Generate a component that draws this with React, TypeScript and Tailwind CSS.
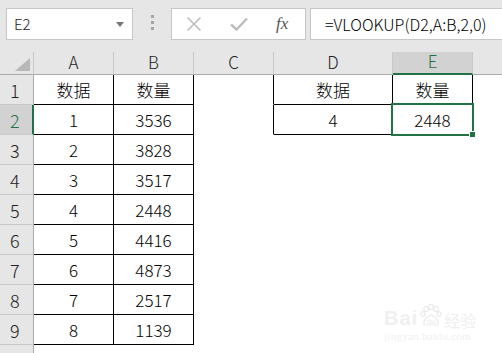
const COLS = ['A', 'B', 'C', 'D', 'E'];

const colA = ['数据', '1', '2', '3', '4', '5', '6', '7', '8'];
const colB = ['数量', '3536', '3828', '3517', '2448', '4416', '4873', '2517', '1139'];

function cellText(row: number, col: number) {
  if (col === 0) return colA[row - 1] ?? '';
  if (col === 1) return colB[row - 1] ?? '';
  if (row === 1 && col === 3) return '数据';
  if (row === 1 && col === 4) return '数量';
  if (row === 2 && col === 3) return '4';
  if (row === 2 && col === 4) return '2448';
  return '';
}

function Cell({ row, col }: { row: number; col: number }) {
  const inLeft = row <= 9 && col <= 1;
  const inRight = row <= 2 && (col === 3 || col === 4);
  const leftOfRight = row <= 2 && col === 2;
  const rightBorder = inLeft || inRight || leftOfRight ? 'border-r-black' : 'border-r-transparent';
  const bottomBorder = inLeft || inRight ? 'border-b-black' : 'border-b-transparent';
  return (
    <div
      className={`flex items-center justify-center border-r border-b pt-[1px] bg-white text-black text-[17px] font-light ${rightBorder} ${bottomBorder}`}
    >
      {cellText(row, col)}
    </div>
  );
}

function Toolbar() {
  return (
    <div className="flex items-start h-[52px] bg-[#e6e6e6] pt-[8px] pl-[6px]">
      {/* 名称框 */}
      <div className="flex items-center justify-between w-[127px] h-[32px] bg-white border border-[#c6c6c6] pl-[7px] pr-[8px]">
        <span className="text-[15px] font-light text-[#222]">E2</span>
        <svg width="8" height="5" viewBox="0 0 8 5">
          <polygon points="0,0 8,0 4,5" fill="#777" />
        </svg>
      </div>
      <div className="flex flex-col gap-[3px] w-[38px] items-center pt-[7px]">
        <span className="w-[3px] h-[3px] bg-[#a6a6a6]" />
        <span className="w-[3px] h-[3px] bg-[#a6a6a6]" />
        <span className="w-[3px] h-[3px] bg-[#a6a6a6]" />
      </div>
      {/* 取消 / 确认 / 插入函数 */}
      <div className="flex items-center w-[135px] h-[32px] bg-white border border-[#c6c6c6]">
        <svg className="ml-[14px]" width="16" height="16" viewBox="0 0 16 16">
          <path d="M1.5 1.5 L14.5 14.5 M14.5 1.5 L1.5 14.5" stroke="#bdbdbd" strokeWidth="1.6" fill="none" />
        </svg>
        <svg className="ml-[28px]" width="18" height="14" viewBox="0 0 18 14">
          <path d="M1 7.5 L6.5 12.5 L17 1.5" stroke="#bdbdbd" strokeWidth="2.4" fill="none" />
        </svg>
        <span className="ml-[28px] text-[17px] italic text-[#555] [font-family:'Liberation_Serif',serif]">fx</span>
      </div>
      {/* 编辑栏 */}
      <div className="flex items-center flex-1 h-[32px] ml-[4px] bg-white border border-r-0 border-[#c6c6c6] pl-[14px]">
        <span className="text-[16px] font-light text-black">=VLOOKUP(D2,A:B,2,0)</span>
      </div>
    </div>
  );
}

function Sheet() {
  const rows = Array.from({ length: 10 }, (_, i) => i + 1);
  return (
    <div className="grid grid-cols-[34px_80px_80px_80px_119px_80px_1fr] grid-rows-[23px_repeat(10,30px)]">
      {/* 左上角 */}
      <div className="relative bg-[#e6e6e6] border-r border-b border-r-[#c8c8c8] border-b-[#ababab]">
        <svg className="absolute left-[15px] top-[6px]" width="15" height="13" viewBox="0 0 15 13">
          <polygon points="15,0 15,13 0,13" fill="#b8b8b8" />
        </svg>
      </div>
      {COLS.map((c) =>
        c === 'E' ? (
          <div
            key={c}
            className="flex items-end justify-center bg-[#d2d2d2] border-r border-r-[#c8c8c8] border-b-2 border-b-[#217346] text-[#217346] text-[17px] font-light"
          >
            {c}
          </div>
        ) : (
          <div
            key={c}
            className="flex items-end justify-center bg-[#e6e6e6] border-r border-b border-r-[#c8c8c8] border-b-[#ababab] text-[#222] text-[17px] font-light"
          >
            {c}
          </div>
        ),
      )}
      <div className="bg-[#e6e6e6] border-b border-b-[#ababab]" />

      {rows.map((r) => (
        <div key={r} className="contents">
          {r === 2 ? (
            <div className="flex items-end pl-[10px] bg-[#d2d2d2] border-r-2 border-r-[#217346] border-b border-b-[#c8c8c8] text-[#217346] text-[18px] font-light">
              {r}
            </div>
          ) : (
            <div className="flex items-end pl-[10px] bg-[#e6e6e6] border-r border-r-[#ababab] border-b border-b-[#c8c8c8] text-[#222] text-[18px] font-light">
              {r < 10 ? r : ''}
            </div>
          )}
          {[0, 1, 2, 3, 4].map((c) => (
            <Cell key={c} row={r} col={c} />
          ))}
          <div className="bg-white" />
        </div>
      ))}
    </div>
  );
}

function Watermark() {
  return (
    <div className="absolute left-[384px] top-[308px] flex flex-col items-start text-[#f0f0f0] pointer-events-none">
      <div className="flex items-end gap-[1px]">
        <span className="text-[20px] font-bold leading-none tracking-[1px] [font-family:'Liberation_Sans',sans-serif]">Bai</span>
        <svg width="24" height="24" viewBox="0 0 24 24" className="-mt-[6px]">
          <g fill="none" stroke="#ebebeb" strokeWidth="1.2">
            <ellipse cx="7" cy="5" rx="2.2" ry="2.6" />
            <ellipse cx="12" cy="3" rx="2.2" ry="2.6" />
            <ellipse cx="17" cy="5" rx="2.2" ry="2.6" />
            <ellipse cx="4" cy="10" rx="2" ry="2.4" />
            <ellipse cx="20" cy="10" rx="2" ry="2.4" />
            <path d="M5 21 Q4 14 12 11 Q20 14 19 21 Z" />
          </g>
          <text x="12" y="20" textAnchor="middle" fontSize="8" fill="#ebebeb" fontFamily="Liberation Sans">du</text>
        </svg>
        <span className="text-[16px] leading-none [font-family:'Noto_Sans_CJK_SC',sans-serif]">经验</span>
      </div>
      <span className="mt-[3px] text-[11px] leading-none tracking-[0.3px] [font-family:'Liberation_Serif',serif]">jingyan.baidu.com</span>
    </div>
  );
}

export default function App() {
  return (
    <div className="relative w-[502px] h-[353px] overflow-hidden bg-white [font-family:'Noto_Sans_CJK_SC',sans-serif]">
      <Toolbar />
      <Sheet />
      {/* 选中单元格 E2 */}
      <div className="absolute left-[391px] top-[103px] w-[83px] h-[33px] border-2 border-[#217346]" />
      <div className="absolute left-[469px] top-[131px] w-[7px] h-[7px] bg-[#217346] border border-white" />
      <Watermark />
    </div>
  );
}
